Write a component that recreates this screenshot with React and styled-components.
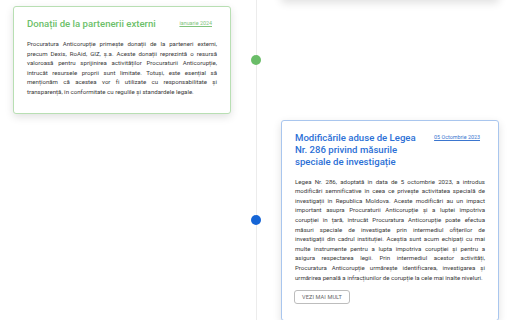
import React from "react";
import styled, { createGlobalStyle } from "styled-components";

const GlobalStyle = createGlobalStyle`
  html, body {
    margin: 0;
    padding: 0;
    background: #fff;
    overflow: hidden;
  }
  body {
    font-family: "Roboto", "Noto Sans", sans-serif;
  }
`;

const themes = {
  green: {
    border: "#b8dfb3",
    title: "#6cbf69",
    date: "#7fc47c",
    dot: "#6abd68",
  },
  blue: {
    border: "#a9c6ee",
    title: "#2b6fd6",
    date: "#3b76cf",
    dot: "#1565d6",
  },
};

// text kept line by line so the justified wrap matches the design
const items = [
  {
    side: "right",
    tone: "blue",
    ghost: true,
  },
  {
    side: "left",
    tone: "green",
    title: "Donații de la partenerii externi",
    date: "ianuarie 2024",
    lines: [
      "Procuratura Anticorupție primește donații de la parteneri externi,",
      "precum Dexis, RoAid, GIZ, ș.a. Aceste donații reprezintă o resursă",
      "valoroasă pentru sprijinirea activităților Procuraturii Anticorupție,",
      "întrucât resursele proprii sunt limitate. Totuși, este esențial să",
      "menționăm că acestea vor fi utilizate cu responsabilitate și",
      "transparență, în conformitate cu regulile și standardele legale.",
    ],
  },
  {
    side: "right",
    tone: "blue",
    title: "Modificările aduse de Legea Nr. 286 privind măsurile speciale de investigație",
    date: "05 Octombrie 2023",
    lines: [
      "Legea Nr. 286, adoptată în data de 5 octombrie 2023, a introdus",
      "modificări semnificative în ceea ce privește activitatea specială de",
      "investigații în Republica Moldova. Aceste modificări au un impact",
      "important asupra Procuraturii Anticorupție și a luptei împotriva",
      "corupției în țară, întrucât Procuratura Anticorupție poate efectua",
      "măsuri speciale de investigate prin intermediul ofițerilor de",
      "investigații din cadrul instituției. Aceștia sunt acum echipați cu mai",
      "multe instrumente pentru a lupta împotriva corupției și pentru a",
      "asigura respectarea legii. Prin intermediul acestor activități,",
      "Procuratura Anticorupție urmărește identificarea, investigarea și",
      "urmărirea penală a infracțiunilor de corupție la cele mai înalte niveluri.",
    ],
    more: true,
  },
];

const TimelineItem = ({ item }) => {
  const t = themes[item.tone];
  const card = item.ghost ? (
    <GhostCard $border={t.border} />
  ) : (
    <Card $border={t.border}>
      <CardHead>
        <Title $color={t.title}>{item.title}</Title>
        <DateLink $color={t.date}>{item.date}</DateLink>
      </CardHead>
      <Body>
        {item.lines.map((line, i) => (
          <Line key={i} $last={i === item.lines.length - 1}>
            {line}
          </Line>
        ))}
      </Body>
      {item.more && <MoreButton>VEZI MAI MULT</MoreButton>}
    </Card>
  );

  return (
    <Row>
      <LeftCell>{item.side === "left" && card}</LeftCell>
      <DotCell>{!item.ghost && <Dot $color={t.dot} />}</DotCell>
      <RightCell>{item.side === "right" && card}</RightCell>
    </Row>
  );
};

const App = () => {
  return (
    <>
      <GlobalStyle />
      <Timeline>
        {items.map((item, i) => (
          <TimelineItem key={i} item={item} />
        ))}
      </Timeline>
    </>
  );
};

export default App;

const Timeline = styled.div`
  position: relative;
  width: 520px;
  display: flex;
  flex-direction: column;
  gap: 6px;
  margin-top: -40px;
  &::before {
    content: "";
    position: absolute;
    top: 0;
    bottom: 0;
    left: 256px;
    width: 1px;
    background: #ececec;
  }
`;

const Row = styled.div`
  display: grid;
  grid-template-columns: 251px 10px 1fr;
  align-items: center;
`;

const LeftCell = styled.div`
  padding-left: 13px;
`;

const RightCell = styled.div`
  padding-left: 20px;
`;

const DotCell = styled.div`
  position: relative;
  z-index: 1;
  display: flex;
  justify-content: center;
`;

const Dot = styled.span`
  display: block;
  width: 10px;
  height: 10px;
  border-radius: 50%;
  background: ${(p) => p.$color};
`;

const Card = styled.div`
  box-sizing: border-box;
  width: 218px;
  padding: 11px 13px 16px;
  background: #fff;
  border: 1px solid ${(p) => p.$border};
  border-radius: 3px;
  box-shadow: 0 3px 8px rgba(0, 0, 0, 0.12);
`;

const GhostCard = styled(Card)`
  height: 40px;
`;

const CardHead = styled.div`
  display: flex;
  justify-content: space-between;
  align-items: flex-start;
  gap: 12px;
`;

const Title = styled.h3`
  margin: 0;
  flex: 1;
  font-size: 9.6px;
  line-height: 12px;
  font-weight: 500;
  color: ${(p) => p.$color};
`;

const DateLink = styled.a`
  flex-shrink: 0;
  margin-top: 2px;
  margin-right: 5px;
  font-size: 5.4px;
  line-height: 7px;
  color: ${(p) => p.$color};
  text-decoration: underline;
`;

const Body = styled.p`
  margin: 9px 0 0;
  font-size: 6.1px;
  line-height: 9.6px;
  color: #3a3a3a;
  font-variant-ligatures: none;
`;

const Line = styled.span`
  display: block;
  white-space: nowrap;
  text-align: justify;
  text-align-last: ${(p) => (p.$last ? "left" : "justify")};
`;

const MoreButton = styled.button`
  margin-top: 8px;
  margin-left: -1px;
  height: 14px;
  padding: 0 7px;
  background: #fff;
  border: 1px solid #bdbdbd;
  border-radius: 3px;
  font-family: inherit;
  font-size: 5.6px;
  color: #666;
  letter-spacing: 0.1px;
`;
